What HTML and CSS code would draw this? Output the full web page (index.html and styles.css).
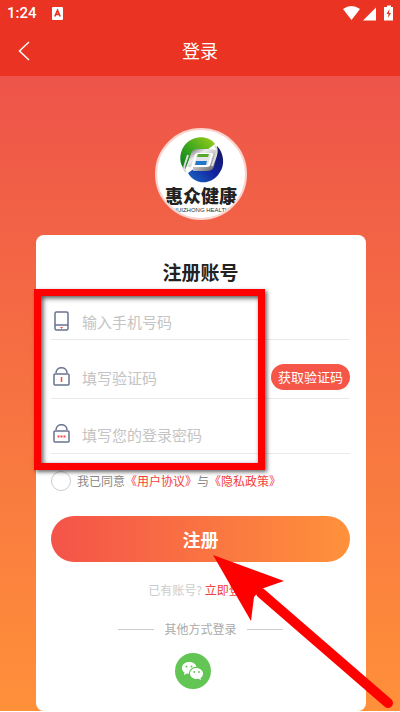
FILE: index.html
```html
<!DOCTYPE html>
<html lang="zh-CN">
<head>
<meta charset="utf-8">
<meta name="viewport" content="width=device-width, initial-scale=1">
<title>登录</title>
<link rel="stylesheet" href="styles.css">
</head>
<body>
<div class="page">
  <header class="header">
    <div class="status">
      <span class="status-left">
        <span class="time">1:24</span>
        <svg width="11" height="13" viewBox="0 0 11 13" aria-hidden="true"><rect width="11" height="13" rx="1" fill="#fff"/><path d="M2.8 9.5 5.5 3.2 8.2 9.5M3.8 7.4h3.4" fill="none" stroke="#ea3323" stroke-width="1.6"/></svg>
      </span>
      <svg width="51" height="16" viewBox="0 0 51 16" aria-hidden="true">
        <path d="M0 4Q8.500-2 17 4L8.500 15Z" fill="#fff"/>
        <path d="M20 15.500 33 2.500V15.500Z" fill="#fff"/>
        <path d="M42 2h2V.500h4V2h2V15.500H41V2Z" fill="#fff"/>
        <path d="M46.500 4 43.500 9h2l-.5 4 3-5h-2Z" fill="#ea3323"/>
      </svg>
    </div>
    <nav class="nav">
      <button class="back" type="button" aria-label="返回"><svg width="12" height="20" viewBox="0 0 12 20" aria-hidden="true"><path d="M11 1 1.500 10 11 19" fill="none" stroke="#fff" stroke-width="1.500"/></svg></button>
      <h1 class="nav-title">登录</h1>
    </nav>
  </header>

  <main class="content">
    <svg class="logo" width="92" height="92" viewBox="0 0 92 92" role="img" aria-label="惠众健康">
      <defs>
        <linearGradient id="green" x1="0" y1="1" x2="1" y2="0"><stop offset="0" stop-color="#08751f"/><stop offset=".45" stop-color="#38a51e"/><stop offset="1" stop-color="#9fcf1b"/></linearGradient>
        <linearGradient id="blue" x1="1" y1="0" x2="0" y2="1"><stop offset="0" stop-color="#161655"/><stop offset=".5" stop-color="#1422a0"/><stop offset="1" stop-color="#1a6cc4"/></linearGradient>
        <linearGradient id="silver" x1="0" y1="0" x2="1" y2="1"><stop offset="0" stop-color="#777"/><stop offset=".3" stop-color="#eee"/><stop offset=".6" stop-color="#bbb"/><stop offset="1" stop-color="#666"/></linearGradient>
        <clipPath id="disc"><circle cx="46" cy="46" r="44"/></clipPath>
      </defs>
      <circle cx="46" cy="46" r="45" fill="#fff" stroke="#fbd3cc" stroke-width="2"/>
      <g clip-path="url(#disc)">
        <path d="M30 42C22 34 25 19 34 13c8-6 21-5 26 3l-8 6H42c-4 0-5 2-6 5Z" fill="url(#green)"/>
        <path d="M62 18c7 7 8 19 3 26-6 12-24 15-32 1l7-5h11c4 0 6-2 7-5Z" fill="url(#blue)"/>
        <path d="M34 39l4-13q1-3 5-3h13q5 0 4 4l-3 11q-1 3-5 3H38" fill="none" stroke="url(#silver)" stroke-width="4"/>
        <path d="M60 18q3 3 1 9l-4 11M31 44q-3-3-1-8l3-9" fill="none" stroke="#ddd" stroke-width="2"/>
        <path d="M42 26h14l-3 11H39Z" fill="#e4e4e4"/>
        <path d="M43 26h11l-1 3H42Z" fill="#57a92a"/>
        <path d="M41 33h11l-1 4H40Z" fill="#2477c8"/>
        <text x="46" y="75" class="logo-name" text-anchor="middle">惠众健康</text>
        <text x="46" y="84" class="logo-sub" text-anchor="middle">HUIZHONG HEALTH</text>
      </g>
    </svg>

    <form class="card">
      <h2 class="card-title">注册账号</h2>
      <div class="fields">
        <div class="field">
          <label for="phone" aria-label="手机号码"><svg width="20" height="22" viewBox="0 0 20 22" aria-hidden="true"><g fill="none" stroke="#69718e" stroke-width="1.500"><rect x="4" y="2" width="13" height="18" rx="1.500"/><path d="M4 15h13"/></g><path d="M9 17h3l-1.500 2Z" fill="#f44"/></svg></label>
          <input id="phone" type="tel" placeholder="输入手机号码">
        </div>
        <div class="field field-code">
          <label for="code" aria-label="验证码"><svg width="20" height="22" viewBox="0 0 20 22" aria-hidden="true"><g fill="none" stroke="#69718e" stroke-width="1.500"><rect x="3" y="8" width="15" height="11" rx="1"/><path d="M5 7C5 0 16 0 16 7"/></g><path d="M10.500 11v5" stroke="#f44" stroke-width="1.500"/></svg></label>
          <input id="code" type="text" placeholder="填写验证码">
          <button class="get-code" type="button">获取验证码</button>
        </div>
        <div class="field field-password">
          <label for="password" aria-label="登录密码"><svg width="20" height="22" viewBox="0 0 20 22" aria-hidden="true"><g fill="none" stroke="#69718e" stroke-width="1.500"><rect x="3" y="8" width="15" height="11" rx="1"/><path d="M5 7C5 0 16 0 16 7"/></g><path d="M6.500 13.500h2m1 0h2m1 0h2" stroke="#f44" stroke-width="2"/></svg></label>
          <input id="password" type="password" placeholder="填写您的登录密码">
        </div>
        <div class="highlight"></div>
      </div>
      <div class="agree">
        <input id="agree" type="checkbox">
        <label for="agree">我已同意<a href="#">《用户协议》</a>与<a href="#">《隐私政策》</a></label>
      </div>
      <button class="submit" type="submit">注册</button>
      <p class="login">已有账号? <a href="#">立即登录</a></p>
      <div class="other"><span>其他方式登录</span></div>
      <div class="socials">
        <button class="wechat" type="button" aria-label="微信登录">
          <svg width="36" height="36" viewBox="0 0 36 36" aria-hidden="true">
            <circle cx="18" cy="18" r="18" fill="#62c554"/>
            <path d="M14 9c-4 0-7 2.500-7 6 0 2 1 3.500 2.500 4.500L9 22l3-1.500 2 .3C14 16 18 13.500 21.500 14 21 11 18 9 14 9Z" fill="#fff"/>
            <path d="M21.500 15c-4 0-6.500 2.500-6.500 5.500s3 5.500 6.500 5.500l2-.3L26 27l-.5-2c1.500-1 2.500-2.500 2.500-4.500 0-3-3-5.500-6.500-5.500Z" fill="#fff"/>
            <g fill="#62c554"><circle cx="11.500" cy="13.500" r="1"/><circle cx="16.500" cy="13.500" r="1"/><circle cx="19.300" cy="19" r=".9"/><circle cx="24" cy="19" r=".9"/></g>
          </svg>
        </button>
      </div>
      <svg class="arrow" width="182" height="156" viewBox="0 0 182 156" aria-hidden="true">
        <path d="M48 38 175 148" stroke="red" stroke-width="10" stroke-linecap="round"/>
        <path d="M0 0 71 26 48 34 41 42 38 66Z" fill="red"/>
      </svg>
    </form>
  </main>
</div>
</body>
</html>
```
FILE: styles.css
```css
* {
  box-sizing: border-box;
}

body {
  margin: 0;
  font-family: "Noto Sans CJK SC", sans-serif;
  background: #fff;
}

button,
input {
  margin: 0;
  padding: 0;
  border: 0;
  background: none;
  font-family: inherit;
}

a {
  color: #f5413b;
  text-decoration: none;
}

.page {
  background: linear-gradient(#ee5449 76px, #ff903a);
  margin-bottom: 1px;
  overflow: hidden;
}

.header {
  height: 76px;
  background: #ea3323;
  color: #fff;
}

.status {
  display: flex;
  justify-content: space-between;
  align-items: center;
  height: 26px;
  padding: 0 6px 0 7px;
}

.status-left {
  display: flex;
  align-items: center;
  gap: 15px;
}

.time {
  font: 500 15px/24px Roboto, sans-serif;
}

.nav {
  position: relative;
  display: flex;
  justify-content: center;
  align-items: center;
  height: 48px;
}

.back {
  position: absolute;
  left: 18px;
  top: 15px;
  height: 20px;
}

.back svg,
.wechat svg,
.field svg {
  display: block;
}

.nav-title {
  margin: 0;
  font-size: 18px;
  line-height: 24px;
  font-weight: 400;
}

.content {
  padding: 52px 34px 0 36px;
}

.logo {
  display: block;
  margin: 0 auto 15px;
}

.logo-name {
  font-size: 18px;
  font-weight: 900;
  fill: #222;
}

.logo-sub {
  font-family: "Liberation Sans", sans-serif;
  font-size: 6px;
  fill: #333;
}

.card {
  position: relative;
  padding: 24px 16px 22px 15px;
  border-radius: 8px;
  background: #fff;
}

.card-title {
  margin: 0;
  color: #222;
  font-size: 19px;
  line-height: 26px;
  font-weight: 700;
  text-align: center;
}

.fields {
  position: relative;
  padding-top: 20px;
}

.field {
  display: flex;
  align-items: center;
  height: 35px;
  padding-bottom: 2px;
  border-bottom: 1px solid #eaeaea;
}

.field-code {
  height: 59px;
  padding-top: 18px;
}

.field-password {
  height: 55px;
  padding-top: 18px;
}

.field input {
  flex: 1;
  min-width: 0;
  height: 24px;
  margin-left: 11px;
  color: #333;
  font-size: 15px;
  outline: 0;
}

.field input::placeholder {
  color: #c4c4c4;
}

.get-code {
  height: 26px;
  padding: 0 7px;
  border-radius: 13px;
  background: #f55648;
  color: #fff;
  font-size: 13px;
  line-height: 24px;
}

.highlight {
  position: absolute;
  top: 4px;
  left: -17px;
  width: 231px;
  height: 181px;
  border: 7px solid red;
  box-shadow: 2px 2px 4px rgba(0, 0, 0, .6), inset 2px 2px 5px rgba(0, 0, 0, .7);
  pointer-events: none;
}

.agree {
  display: flex;
  align-items: center;
  gap: 6px;
  margin-top: 17px;
  color: #888;
  font-size: 12px;
  line-height: 20px;
}

.agree input {
  appearance: none;
  width: 20px;
  height: 20px;
  border: 1px solid #ccc;
  border-radius: 50%;
}

.submit {
  display: block;
  width: 100%;
  height: 46px;
  margin-top: 25px;
  border-radius: 23px;
  background: linear-gradient(90deg, #f45349, #ff923b);
  color: #fff;
  font-size: 18px;
  font-weight: 700;
}

.login {
  margin: 18px 0 0;
  color: #ccc;
  font-size: 12px;
  line-height: 20px;
  text-align: center;
}

.other {
  display: flex;
  justify-content: center;
  align-items: center;
  gap: 10px;
  margin-top: 19px;
  color: #aaa;
  font-size: 12px;
  line-height: 20px;
}

.other::before,
.other::after {
  content: "";
  width: 36px;
  height: 1px;
  background: #ccc;
}

.socials {
  display: flex;
  justify-content: center;
  margin-top: 14px;
}

.wechat {
  margin-right: 16px;
}

.arrow {
  position: absolute;
  top: 320px;
  left: 177px;
}
```
